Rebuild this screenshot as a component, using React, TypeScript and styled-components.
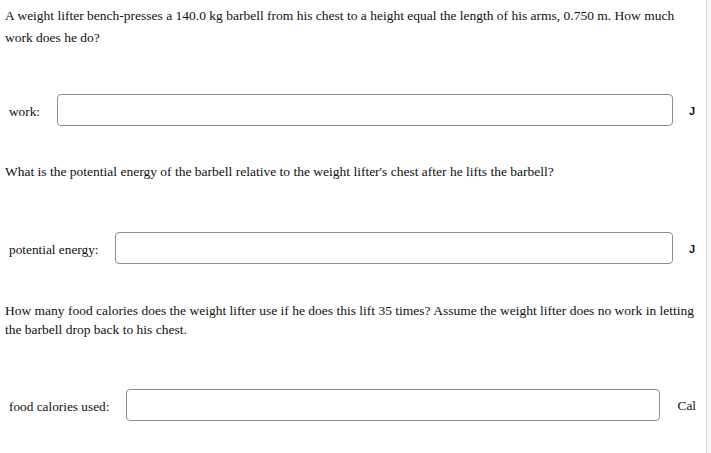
import React from "react";
import styled, { createGlobalStyle } from "styled-components";

const Global = createGlobalStyle`
  html, body { margin: 0; padding: 0; background: #f7f7f7; }
  body { font-family: "Liberation Serif", "Times New Roman", serif; color: #111; }
`;

const Page = styled.div`
  width: 706px;
  min-height: 453px;
  background: #fff;
  border-right: 1px solid #dcdcdc;
  padding-top: 5px;
  box-sizing: content-box;
`;

const Question = styled.p<{ $lh: number; $mt: number }>`
  margin: ${(p) => p.$mt}px 0 0 0;
  padding: 0 4px 0 5px;
  font-size: 13.5px;
  line-height: ${(p) => p.$lh}px;
`;

const Row = styled.div<{ $mt: number }>`
  display: flex;
  align-items: center;
  margin-top: ${(p) => p.$mt}px;
  padding: 0 10px 0 9px;
`;

const Label = styled.label`
  font-size: 13.3px;
  margin-right: 17px;
  padding-top: 3px;
  white-space: nowrap;
`;

const Input = styled.input`
  flex: 1;
  height: 32px;
  box-sizing: border-box;
  border: 1px solid #8c8c8c;
  border-radius: 4px;
  background: #fff;
  outline: none;
  min-width: 0;
`;

const Unit = styled.span<{ $bold?: boolean }>`
  margin-left: ${(p) => (p.$bold ? "16px" : "18px")};
  margin-right: ${(p) => (p.$bold ? "1px" : "0")};
  font-size: ${(p) => (p.$bold ? "11px" : "13.3px")};
  font-family: ${(p) => (p.$bold ? '"Liberation Sans", Arial, sans-serif' : '"Liberation Serif", serif')};
  font-weight: ${(p) => (p.$bold ? 700 : 400)};
  padding-top: 2px;
`;

export default function App() {
  return (
    <>
      <Global />
      <Page>
        <Question $lh={22} $mt={0}>
          A weight lifter bench-presses a 140.0 kg barbell from his chest to a height equal the length of his arms, 0.750 m. How much work does he do?
        </Question>
        <Row $mt={45}>
          <Label>work:</Label>
          <Input />
          <Unit $bold>J</Unit>
        </Row>
        <Question $lh={22} $mt={35}>
          What is the potential energy of the barbell relative to the weight lifter's chest after he lifts the barbell?
        </Question>
        <Row $mt={49}>
          <Label>potential energy:</Label>
          <Input />
          <Unit $bold>J</Unit>
        </Row>
        <Question $lh={19} $mt={37}>
          How many food calories does the weight lifter use if he does this lift 35 times? Assume the weight lifter does no work in letting the barbell drop back to his chest.
        </Question>
        <Row $mt={50}>
          <Label>food calories used:</Label>
          <Input />
          <Unit>Cal</Unit>
        </Row>
      </Page>
    </>
  );
}
